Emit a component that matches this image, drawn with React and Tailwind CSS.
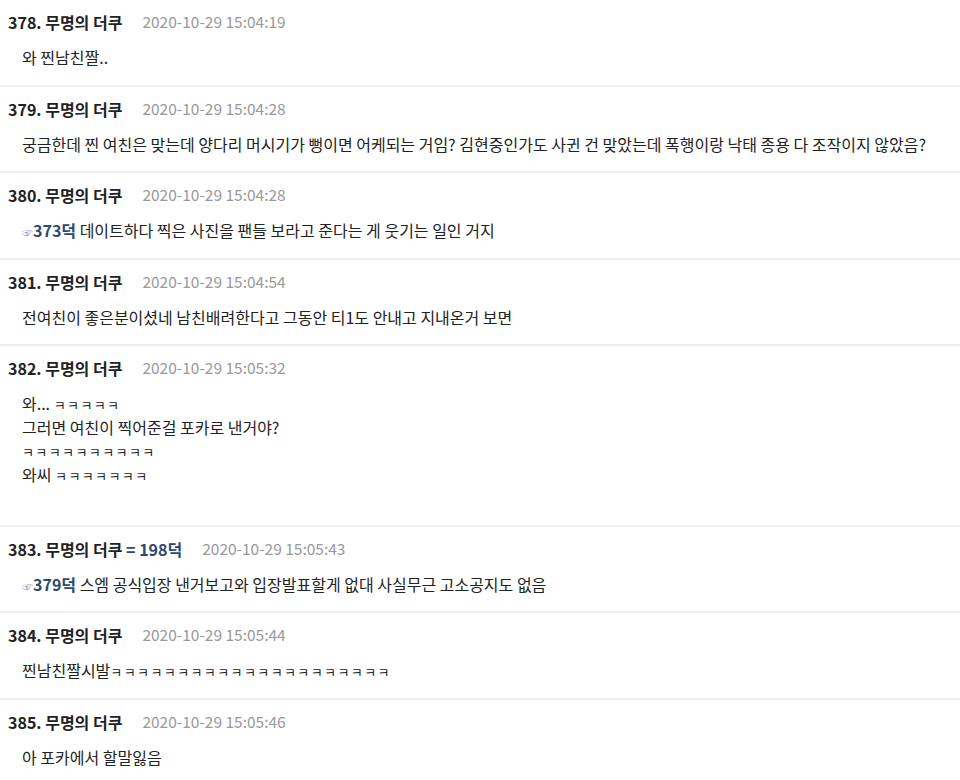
import React from 'react';

const comments = [
  { no: 378, time: '2020-10-29 15:04:19', lines: ['와 찐남친짤..'] },
  {
    no: 379,
    time: '2020-10-29 15:04:28',
    lines: ['궁금한데 찐 여친은 맞는데 양다리 머시기가 뻥이면 어케되는 거임? 김현중인가도 사귄 건 맞았는데 폭행이랑 낙태 종용 다 조작이지 않았음?'],
  },
  { no: 380, time: '2020-10-29 15:04:28', reply: '373덕', lines: ['데이트하다 찍은 사진을 팬들 보라고 준다는 게 웃기는 일인 거지'] },
  { no: 381, time: '2020-10-29 15:04:54', lines: ['전여친이 좋은분이셨네 남친배려한다고 그동안 티1도 안내고 지내온거 보면'] },
  {
    no: 382,
    time: '2020-10-29 15:05:32',
    lines: ['와... ㅋㅋㅋㅋㅋ', '그러면 여친이 찍어준걸 포카로 낸거야?', 'ㅋㅋㅋㅋㅋㅋㅋㅋㅋㅋ', '와씨 ㅋㅋㅋㅋㅋㅋㅋ', ''],
  },
  { no: 383, time: '2020-10-29 15:05:43', same: '198덕', reply: '379덕', lines: ['스엠 공식입장 낸거보고와 입장발표할게 없대 사실무근 고소공지도 없음'] },
  { no: 384, time: '2020-10-29 15:05:44', lines: ['찐남친짤시발ㅋㅋㅋㅋㅋㅋㅋㅋㅋㅋㅋㅋㅋㅋㅋㅋㅋㅋㅋㅋㅋ'] },
  { no: 385, time: '2020-10-29 15:05:46', lines: ['아 포카에서 할말잃음'] },
];

// ㅋ runs render smaller in the original font
const renderLine = (text) =>
  text.split(/(ㅋ+)/).map((part, i) =>
    part.startsWith('ㅋ') ? (
      <span key={i} className="text-[13px] tracking-[1.4px]">{part}</span>
    ) : (
      <React.Fragment key={i}>{part}</React.Fragment>
    )
  );

const Comment = ({ c }) => (
  <div className="border-b-2 border-[#efefef] pl-[8px] pr-2 pt-[11px] pb-[15px]">
    <div className="flex items-center h-[22px]">
      <span className="text-[16px] font-bold text-[#222]">
        {c.no}. 무명의 더쿠
        {c.same && <span className="text-[#2b4a6e]"> = {c.same}</span>}
      </span>
      <span className="ml-[20px] text-[15.5px] text-[#999]">{c.time}</span>
    </div>
    <div className="mt-[13px] pl-[14px] text-[16px] leading-[23.5px] text-[#222]">
      {c.lines.map((l, i) => (
        <div key={i} className="h-[23.5px] whitespace-nowrap">
          {i === 0 && c.reply && (
            <>
              <span className="text-[11px] text-[#8a9ab0]">☞</span>
              <span className="font-bold text-[#2b4a6e]">{c.reply}</span>{' '}
            </>
          )}
          {renderLine(l)}
        </div>
      ))}
    </div>
  </div>
);

export default function App() {
  return (
    <div
      className="w-[960px] h-[780px] overflow-hidden bg-white"
      style={{ fontFamily: '"Noto Sans CJK KR", "Noto Sans", sans-serif' }}
    >
      {comments.map((c) => (
        <Comment key={c.no} c={c} />
      ))}
    </div>
  );
}
